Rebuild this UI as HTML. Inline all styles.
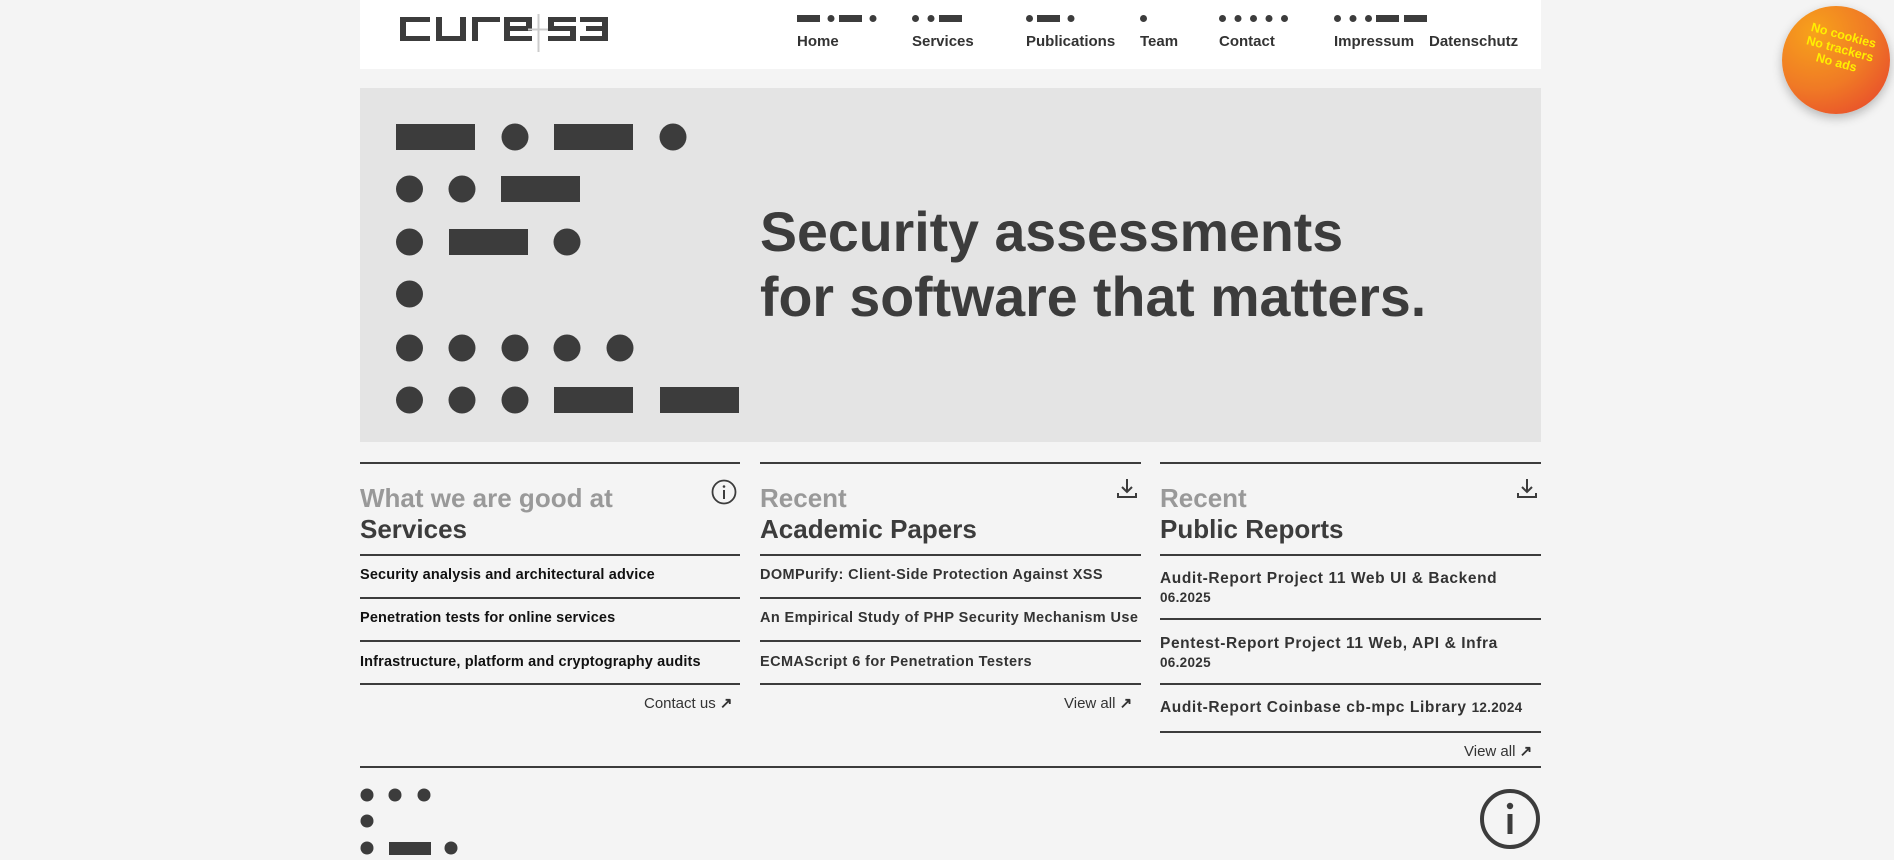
<!DOCTYPE html>
<html><head><meta charset="utf-8"><style>
*{margin:0;padding:0;box-sizing:border-box}
body{width:1894px;height:860px;background:#f4f4f4;font-family:"Liberation Sans",sans-serif;color:#3c3c3c;position:relative;overflow:hidden}
.a{position:absolute}
.hdr{left:360px;top:0;width:1181px;height:69px;background:#fff}
.nav{font-size:15px;font-weight:bold;top:33px;color:#333}
.hero{left:360px;top:88px;width:1181px;height:354px;background:#e4e4e4}
.h1{left:760px;top:200px;font-size:55.5px;font-weight:bold;line-height:65px;color:#3c3c3c}
.line{height:1.5px;background:#3c3c3c}
.hg{font-size:26px;font-weight:bold;color:#999;line-height:31px}
.hd{font-size:26px;font-weight:bold;color:#3c3c3c;line-height:31px}
.it{font-size:14.5px;font-weight:bold;color:#111;line-height:18px;letter-spacing:0.15px}
.rp{font-size:15.5px;letter-spacing:0.6px}
.sm{font-size:15px;color:#333}
</style></head><body>
<div class="a hdr"></div>
<svg class="a" style="left:400px;top:14px" width="210" height="38" viewBox="0 0 210 38">
<g fill="#3c3c3c">
<path d="M0 3h30v5H6v14h24v5H0z"/>
<path d="M36 3h6v19h18V3h6v24H36z"/>
<path d="M72 3h28v5H78v19h-6z"/>
<path d="M104 3h28v14h-22v5h22v5h-28zM110 8v4h16V8z"/>
<path d="M148 3h28v5h-22v4h22v15h-28v-5h22v-5h-22z"/>
<path d="M180 3h28v24h-28v-5h22v-5h-16v-5h16V8h-22z"/>
</g>
<rect x="137.5" y="0" width="2" height="38" fill="#ccc"/><rect x="128" y="14.5" width="20" height="2" fill="#ccc"/>
</svg>
<svg class="a" style="left:797px;top:14px" width="640" height="10">
<g fill="#3c3c3c">
<rect x="0" y="1" width="23" height="7"/><circle cx="34" cy="4.5" r="3.5"/><rect x="42" y="1" width="23" height="7"/><circle cx="76" cy="4.5" r="3.5"/>
<circle cx="118.5" cy="4.5" r="3.5"/><circle cx="134" cy="4.5" r="3.5"/><rect x="142" y="1" width="23" height="7"/>
<circle cx="232.5" cy="4.5" r="3.5"/><rect x="240" y="1" width="23" height="7"/><circle cx="274" cy="4.5" r="3.5"/>
<circle cx="346.5" cy="4.5" r="3.5"/>
<circle cx="425.5" cy="4.5" r="3.5"/><circle cx="441" cy="4.5" r="3.5"/><circle cx="456.5" cy="4.5" r="3.5"/><circle cx="472" cy="4.5" r="3.5"/><circle cx="487.5" cy="4.5" r="3.5"/>
<circle cx="540.5" cy="4.5" r="3.5"/><circle cx="556" cy="4.5" r="3.5"/><circle cx="571.5" cy="4.5" r="3.5"/><rect x="579" y="1" width="23" height="7"/><rect x="607" y="1" width="23" height="7"/>
</g></svg>
<div class="a nav" style="left:797px">Home</div>
<div class="a nav" style="left:912px">Services</div>
<div class="a nav" style="left:1026px">Publications</div>
<div class="a nav" style="left:1140px">Team</div>
<div class="a nav" style="left:1219px">Contact</div>
<div class="a nav" style="left:1334px">Impressum</div>
<div class="a nav" style="left:1429px">Datenschutz</div>

<div class="a" style="left:1782px;top:6px;width:108px;height:108px;border-radius:50%;background:radial-gradient(circle at 30% 25%,#f7a21b,#f07a25 50%,#e53e2e);box-shadow:0 4px 10px rgba(0,0,0,.25)"></div>
<div class="a" style="left:1790px;top:28px;width:100px;text-align:center;transform:rotate(15deg);color:#ffef00;font-weight:bold;font-size:12.5px;line-height:14px">No cookies<br>No trackers<br>No ads</div>

<div class="a hero"></div>
<svg class="a" style="left:396px;top:120px" width="350" height="300">
<g fill="#3c3c3c">
<rect x="0" y="4" width="79" height="26"/><circle cx="119" cy="17" r="13.5"/><rect x="158" y="4" width="79" height="26"/><circle cx="277" cy="17" r="13.5"/>
<circle cx="13.5" cy="69" r="13.5"/><circle cx="66" cy="69" r="13.5"/><rect x="105" y="56" width="79" height="26"/>
<circle cx="13.5" cy="122" r="13.5"/><rect x="53" y="109" width="79" height="26"/><circle cx="171" cy="122" r="13.5"/>
<circle cx="13.5" cy="174" r="13.5"/>
<circle cx="13.5" cy="228" r="13.5"/><circle cx="66" cy="228" r="13.5"/><circle cx="119" cy="228" r="13.5"/><circle cx="171" cy="228" r="13.5"/><circle cx="224" cy="228" r="13.5"/>
<circle cx="13.5" cy="280" r="13.5"/><circle cx="66" cy="280" r="13.5"/><circle cx="119" cy="280" r="13.5"/><rect x="158" y="267" width="79" height="26"/><rect x="264" y="267" width="79" height="26"/>
</g></svg>
<div class="a h1">Security assessments<br>for software that matters.</div>

<!-- col1 -->
<div class="a line" style="left:360px;top:462px;width:380px"></div>
<div class="a hg" style="left:360px;top:483px">What we are good at</div>
<div class="a hd" style="left:360px;top:514px">Services</div>
<svg class="a" style="left:711px;top:479px" width="26" height="26"><circle cx="13" cy="13" r="11.5" fill="none" stroke="#3c3c3c" stroke-width="1.8"/><rect x="12" y="11" width="2" height="9" fill="#3c3c3c"/><circle cx="13" cy="7.5" r="1.3" fill="#3c3c3c"/></svg>
<div class="a line" style="left:360px;top:554px;width:380px"></div>
<div class="a it" style="left:360px;top:566px">Security analysis and architectural advice</div>
<div class="a line" style="left:360px;top:597px;width:380px"></div>
<div class="a it" style="left:360px;top:609px">Penetration tests for online services</div>
<div class="a line" style="left:360px;top:640px;width:380px"></div>
<div class="a it" style="left:360px;top:653px">Infrastructure, platform and cryptography audits</div>
<div class="a line" style="left:360px;top:683px;width:380px"></div>
<div class="a sm" style="left:644px;top:694px">Contact us <b>↗</b></div>

<!-- col2 -->
<div class="a line" style="left:760px;top:462px;width:381px"></div>
<div class="a hg" style="left:760px;top:483px">Recent</div>
<div class="a hd" style="left:760px;top:514px">Academic Papers</div>
<svg class="a" style="left:1115px;top:476px" width="24" height="24" fill="none" stroke="#3c3c3c" stroke-width="2"><path d="M12 3v13M7 11l5 5 5-5M3 17v4h18v-4"/></svg>
<div class="a line" style="left:760px;top:554px;width:381px"></div>
<div class="a it" style="left:760px;top:566px;color:#333;letter-spacing:0.4px">DOMPurify: Client-Side Protection Against XSS</div>
<div class="a line" style="left:760px;top:597px;width:381px"></div>
<div class="a it" style="left:760px;top:609px;color:#333;letter-spacing:0.4px">An Empirical Study of PHP Security Mechanism Use</div>
<div class="a line" style="left:760px;top:640px;width:381px"></div>
<div class="a it" style="left:760px;top:653px;color:#333;letter-spacing:0.4px">ECMAScript 6 for Penetration Testers</div>
<div class="a line" style="left:760px;top:683px;width:381px"></div>
<div class="a sm" style="left:1064px;top:694px">View all <b>↗</b></div>

<!-- col3 -->
<div class="a line" style="left:1160px;top:462px;width:381px"></div>
<div class="a hg" style="left:1160px;top:483px">Recent</div>
<div class="a hd" style="left:1160px;top:514px">Public Reports</div>
<svg class="a" style="left:1515px;top:476px" width="24" height="24" fill="none" stroke="#3c3c3c" stroke-width="2"><path d="M12 3v13M7 11l5 5 5-5M3 17v4h18v-4"/></svg>
<div class="a line" style="left:1160px;top:554px;width:381px"></div>
<div class="a it rp" style="left:1160px;top:569px;color:#333;line-height:19px">Audit-Report Project 11 Web UI &amp; Backend<br><span style="font-size:13.5px;letter-spacing:0.3px">06.2025</span></div>
<div class="a line" style="left:1160px;top:618px;width:381px"></div>
<div class="a it rp" style="left:1160px;top:634px;color:#333;line-height:19px">Pentest-Report Project 11 Web, API &amp; Infra<br><span style="font-size:13.5px;letter-spacing:0.3px">06.2025</span></div>
<div class="a line" style="left:1160px;top:683px;width:381px"></div>
<div class="a it rp" style="left:1160px;top:699px;color:#333">Audit-Report Coinbase cb-mpc Library <span style="font-size:13.5px;letter-spacing:0.3px">12.2024</span></div>
<div class="a line" style="left:1160px;top:731px;width:381px"></div>
<div class="a sm" style="left:1464px;top:742px">View all <b>↗</b></div>

<div class="a line" style="left:360px;top:766px;width:1181px"></div>
<svg class="a" style="left:360px;top:786px" width="100" height="74"><g fill="#3c3c3c">
<circle cx="7" cy="9" r="6.5"/><circle cx="35" cy="9" r="6.5"/><circle cx="64" cy="9" r="6.5"/>
<circle cx="7" cy="35" r="6.5"/>
<circle cx="7" cy="62" r="6.5"/><rect x="29" y="56" width="42" height="13"/><circle cx="91" cy="62" r="6.5"/></g></svg>
<svg class="a" style="left:1478px;top:788px" width="64" height="64"><circle cx="32" cy="31" r="28" fill="none" stroke="#3c3c3c" stroke-width="4"/><rect x="29.5" y="26" width="5" height="20" fill="#3c3c3c"/><circle cx="32" cy="18" r="3.2" fill="#3c3c3c"/></svg>
</body></html>
